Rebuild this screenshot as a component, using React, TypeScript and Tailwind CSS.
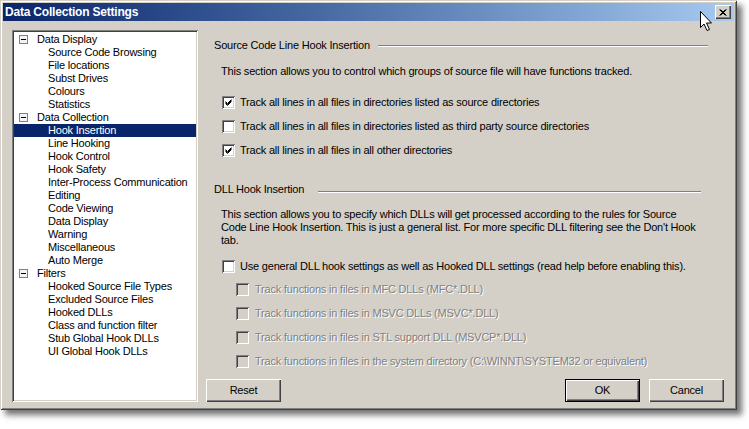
import React from 'react'

const tree = [
  {
    label: 'Data Display',
    children: ['Source Code Browsing', 'File locations', 'Subst Drives', 'Colours', 'Statistics'],
  },
  {
    label: 'Data Collection',
    children: [
      'Hook Insertion',
      'Line Hooking',
      'Hook Control',
      'Hook Safety',
      'Inter-Process Communication',
      'Editing',
      'Code Viewing',
      'Data Display',
      'Warning',
      'Miscellaneous',
      'Auto Merge',
    ],
  },
  {
    label: 'Filters',
    children: [
      'Hooked Source File Types',
      'Excluded Source Files',
      'Hooked DLLs',
      'Class and function filter',
      'Stub Global Hook DLLs',
      'UI Global Hook DLLs',
    ],
  },
]

const disabledRows = [
  'Track functions in files in MFC DLLs (MFC*.DLL)',
  'Track functions in files in MSVC DLLs (MSVC*.DLL)',
  'Track functions in files in STL support DLL (MSVCP*.DLL)',
  'Track functions in files in the system directory (C:\\WINNT\\SYSTEM32 or equivalent)',
]

function MinusBox() {
  return (
    <span className="w-[9px] h-[9px] border border-[#808080] bg-[#f4f4f4] flex items-center justify-center shrink-0">
      <span className="w-[5px] h-px bg-black" />
    </span>
  )
}

function Checkbox({ checked, disabled }: { checked?: boolean; disabled?: boolean }) {
  return (
    <span
      className={
        'w-[13px] h-[13px] shrink-0 flex items-center justify-center shadow-[inset_1px_1px_#808080,inset_-1px_-1px_#fff,inset_2px_2px_#404040,inset_-2px_-2px_#d4d0c8] ' +
        (disabled ? 'bg-[#d4d0c8]' : 'bg-white')
      }
    >
      {checked && (
        <svg width="13" height="13" viewBox="0 0 13 13">
          <path d="M3.5 5.5 L5.5 7.5 L9.5 3.5 M3.5 6.5 L5.5 8.5 L9.5 4.5 M3.5 7.5 L5.5 9.5 L9.5 5.5" stroke="#000" strokeWidth="1" fill="none" />
        </svg>
      )}
    </span>
  )
}

function Etched({ className }: { className: string }) {
  return <span className={'h-[2px] border-t border-[#808080] border-b border-b-white ' + className} />
}

function Button({ label, isDefault }: { label: string; isDefault?: boolean }) {
  return (
    <button
      type="button"
      className={
        'w-[75px] h-[23px] bg-[#d4d0c8] text-black text-[11px] flex items-center justify-center ' +
        (isDefault
          ? 'shadow-[inset_0_0_0_1px_#000,inset_2px_2px_#fff,inset_-2px_-2px_#404040,inset_-3px_-3px_#808080]'
          : 'shadow-[inset_1px_1px_#fff,inset_-1px_-1px_#404040,inset_-2px_-2px_#808080]')
      }
    >
      {label}
    </button>
  )
}

function TitleBar() {
  return (
    <div className="h-[18px] flex items-center bg-gradient-to-r from-[#0a246a] to-[#a6caf0] pl-[2px] pr-[3px]">
      <span className="text-white font-bold text-[12px] leading-none">Data Collection Settings</span>
      <span className="ml-auto w-[16px] h-[14px] bg-[#d4d0c8] flex items-center justify-center shadow-[inset_1px_1px_#fff,inset_-1px_-1px_#404040,inset_-2px_-2px_#808080]">
        <svg width="8" height="7" viewBox="0 0 8 7">
          <path d="M0.5 0.5 L6.5 6.5 M1.5 0.5 L7.5 6.5 M6.5 0.5 L0.5 6.5 M7.5 0.5 L1.5 6.5" stroke="#000" strokeWidth="1" />
        </svg>
      </span>
    </div>
  )
}

function Tree() {
  return (
    <div className="w-[186px] bg-white pt-[3px] px-[2px] shadow-[inset_1px_1px_#808080,inset_-1px_-1px_#fff,inset_2px_2px_#404040,inset_-2px_-2px_#d4d0c8]">
      {tree.map((group) => (
        <div key={group.label}>
          <div className="h-[13px] flex items-center pl-[5px]">
            <MinusBox />
            <span className="ml-[9px] leading-[13px]">{group.label}</span>
          </div>
          {group.children.map((c) => {
            const selected = c === 'Hook Insertion'
            return (
              <div
                key={c}
                className={
                  'h-[13px] leading-[13px] pl-[34px] whitespace-nowrap ' +
                  (selected ? 'bg-[#0a246a] text-white' : '')
                }
              >
                {c}
              </div>
            )
          })}
        </div>
      ))}
    </div>
  )
}

export default function App() {
  return (
    <div className="w-[749px] h-[429px] bg-white relative overflow-hidden font-['Liberation_Sans',Arial,sans-serif] text-[11px] tracking-[-0.2px] text-black">
      <div className="w-[737px] h-[410px] bg-[#d4d0c8] p-[3px] flex flex-col shadow-[inset_1px_1px_#d4d0c8,inset_-1px_-1px_#404040,inset_2px_2px_#fff,inset_-2px_-2px_#808080,5px_5px_6px_rgba(0,0,0,0.55)]">
        <TitleBar />
        <div className="flex flex-1 pl-[9px] pt-[9px] pb-[5px]">
          <Tree />
          <div className="ml-[8px] w-[518px] flex flex-col">
            <div className="mt-[9px] h-[13px] flex items-center pl-[8px] mr-[16px]">
              <span className="leading-[13px] whitespace-nowrap">Source Code Line Hook Insertion</span>
              <Etched className="flex-1 ml-[8px]" />
            </div>
            <p className="mt-[13px] pl-[15px] leading-[13px] whitespace-nowrap">
              This section allows you to control which groups of source file will have functions tracked.
            </p>
            <div className="mt-[18px] pl-[16px] flex flex-col gap-[11px]">
              <label className="h-[13px] flex items-center gap-[5px]">
                <Checkbox checked />
                <span className="whitespace-nowrap">Track all lines in all files in directories listed as source directories</span>
              </label>
              <label className="h-[13px] flex items-center gap-[5px]">
                <Checkbox />
                <span className="whitespace-nowrap">Track all lines in all files in directories listed as third party source directories</span>
              </label>
              <label className="h-[13px] flex items-center gap-[5px]">
                <Checkbox checked />
                <span className="whitespace-nowrap">Track all lines in all files in all other directories</span>
              </label>
            </div>
            <div className="mt-[26px] h-[13px] flex items-center pl-[8px] mr-[23px]">
              <span className="leading-[13px] whitespace-nowrap">DLL Hook Insertion</span>
              <Etched className="flex-1 ml-[14px] mt-[4px]" />
            </div>
            <p className="mt-[12px] pl-[15px] leading-[13px] whitespace-nowrap">
              This section allows you to specify which DLLs will get processed according to the rules for Source
              <br />
              Code Line Hook Insertion. This is just a general list. For more specific DLL filtering see the Don't Hook
              <br />
              tab.
            </p>
            <label className="mt-[13px] pl-[16px] h-[13px] flex items-center gap-[5px]">
              <Checkbox />
              <span className="whitespace-nowrap">
                Use general DLL hook settings as well as Hooked DLL settings (read help before enabling this).
              </span>
            </label>
            <div className="mt-[10px] pl-[30px] flex flex-col gap-[11px]">
              {disabledRows.map((r) => (
                <label key={r} className="h-[13px] flex items-center gap-[6px]">
                  <Checkbox disabled />
                  <span className="whitespace-nowrap text-[#808080] [text-shadow:1px_1px_0_#fff]">{r}</span>
                </label>
              ))}
            </div>
            <div className="mt-auto flex items-end">
              <Button label="Reset" />
              <div className="ml-auto flex gap-[9px]">
                <Button label="OK" isDefault />
                <Button label="Cancel" />
              </div>
            </div>
          </div>
        </div>
      </div>
      <svg className="absolute left-[699px] top-[10px]" width="14" height="22" viewBox="0 0 14 22">
        <path d="M1.5 1.5 L1.5 17.5 L5 14 L8 20.5 L10.5 19.5 L7.5 13 L12.5 13 Z" fill="#fff" stroke="#000" strokeWidth="1" strokeLinejoin="miter" />
      </svg>
    </div>
  )
}
